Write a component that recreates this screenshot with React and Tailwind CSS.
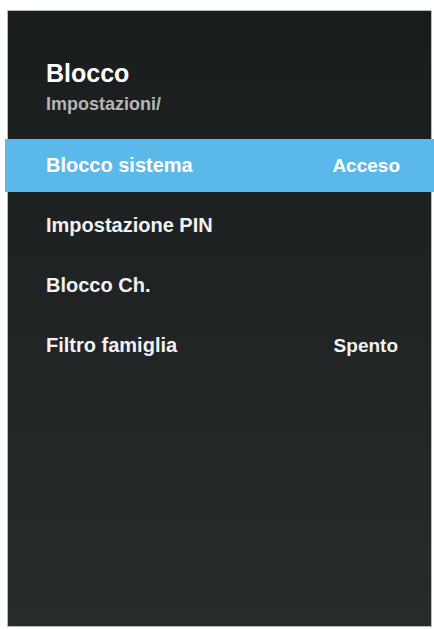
const rows = [
  { label: 'Blocco sistema', value: 'Acceso', active: true },
  { label: 'Impostazione PIN', value: '' },
  { label: 'Blocco Ch.', value: '' },
  { label: 'Filtro famiglia', value: 'Spento' },
];

export default function App() {
  return (
    <div className="w-[434px] h-[629px] bg-white pt-[10px] pl-[7px] font-['Liberation_Sans',Arial,sans-serif] font-bold">
      <div className="w-[425px] h-[617px] border border-[#b9bcbc] bg-gradient-to-b from-[#1a1d1d] via-[#202424] to-[#262b2b] pt-[47px]">
        <div className="pl-[38px]">
          <h1 className="text-[25px] leading-[30px] text-white">Blocco</h1>
          <p className="mt-[5px] text-[18px] leading-[22px] text-[#b4b6b6]">Impostazioni/</p>
        </div>
        <ul className="mt-[24px] flex flex-col gap-[7px]">
          {rows.map((r) => (
            <li
              key={r.label}
              className={
                r.active
                  ? 'h-[53px] -mx-[3px] pl-[41px] pr-[34px] flex items-center justify-between bg-[#5bb9e9] text-white'
                  : 'h-[53px] pl-[38px] pr-[33px] flex items-center justify-between text-[#f2f2f2]'
              }
            >
              <span className="text-[20px] leading-[23px]">{r.label}</span>
              <span className="text-[19px] leading-[23px]">{r.value}</span>
            </li>
          ))}
        </ul>
      </div>
    </div>
  );
}
